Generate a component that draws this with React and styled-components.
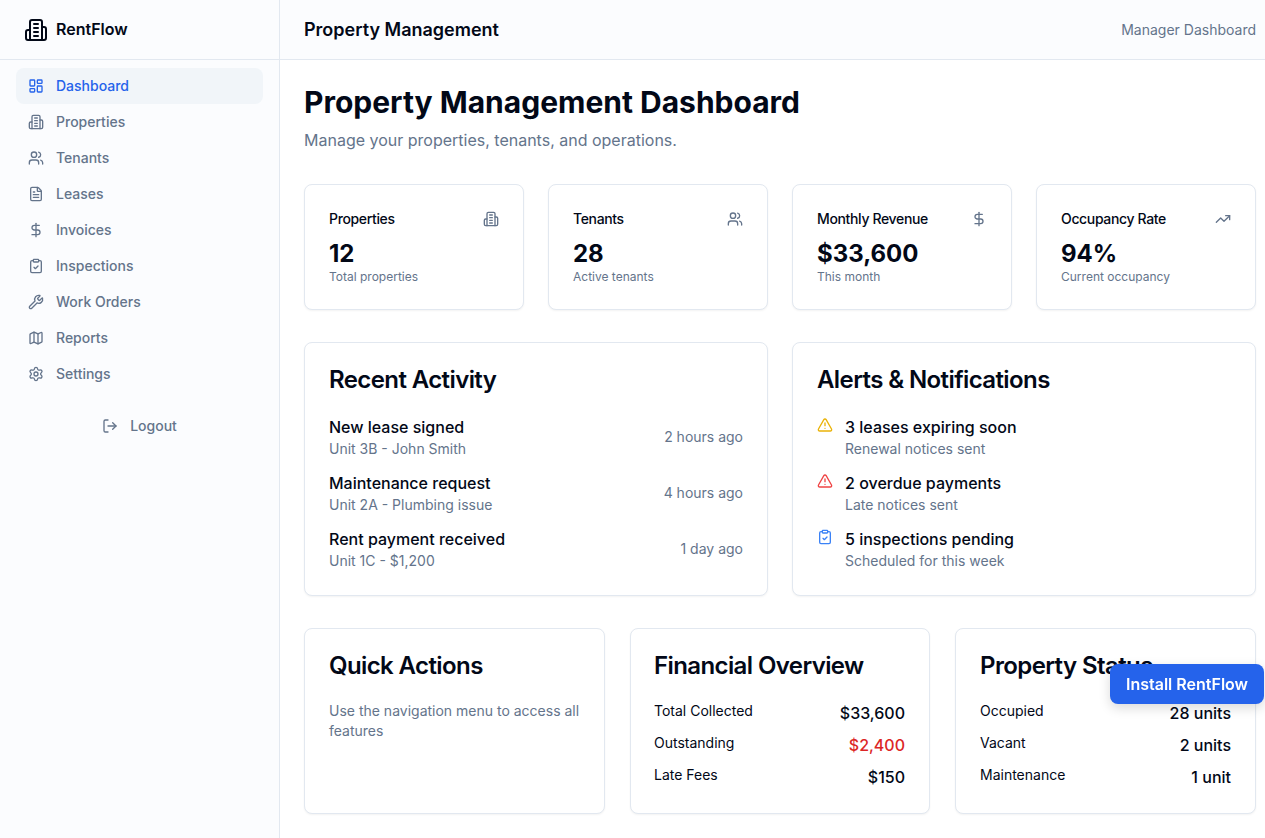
import React from "react";
import styled, { createGlobalStyle } from "styled-components";
import {
  LayoutDashboard,
  Users,
  FileText,
  DollarSign,
  ClipboardCheck,
  Wrench,
  Map,
  Settings,
  LogOut,
  TrendingUp,
  TriangleAlert,
} from "lucide-react";

const GlobalStyle = createGlobalStyle`
  * { box-sizing: border-box; }
  html, body {
    margin: 0;
    height: 100%;
    overflow: hidden;
    background: #ffffff;
    color: #020817;
    font-family: Inter, "Liberation Sans", sans-serif;
  }
`;

const Layout = styled.div`
  display: flex;
  width: 1265px;
  height: 838px;
`;

const Sidebar = styled.aside`
  width: 280px;
  flex-shrink: 0;
  border-right: 1px solid #e2e8f0;
  background: #fbfcfe;
`;

const Brand = styled.div`
  height: 60px;
  display: flex;
  align-items: center;
  gap: 8px;
  padding: 0 24px;
  border-bottom: 1px solid #e2e8f0;
  font-size: 16px;
  font-weight: 600;
`;

const Lifted = styled.span`
  padding-bottom: 2px;
`;

const Nav = styled.nav`
  display: flex;
  flex-direction: column;
  padding: 8px 16px;
`;

const NavItem = styled.a`
  height: 36px;
  display: flex;
  align-items: center;
  gap: 12px;
  padding: 0 12px;
  border-radius: 8px;
  font-size: 14px;
  font-weight: 500;
  color: ${(props) => (props.$active ? "#2563eb" : "#64748b")};
  background: ${(props) => (props.$active ? "#f1f5f9" : "transparent")};
`;

const LogoutButton = styled.button`
  height: 36px;
  margin-top: 16px;
  display: flex;
  align-items: center;
  justify-content: center;
  gap: 12px;
  border: 0;
  background: transparent;
  font-family: inherit;
  font-size: 14px;
  font-weight: 500;
  color: #64748b;
`;

const Content = styled.div`
  flex: 1;
  min-width: 0;
`;

const Header = styled.header`
  height: 60px;
  display: flex;
  align-items: center;
  justify-content: space-between;
  padding: 0 9px 0 24px;
  background: #fbfcfe;
  border-bottom: 1px solid #e2e8f0;
`;

const HeaderTitle = styled.div`
  font-size: 18px;
  font-weight: 600;
`;

const HeaderRole = styled.div`
  font-size: 14px;
  color: #64748b;
`;

const Main = styled.main`
  padding: 24px 9px 24px 24px;
`;

const PageTitle = styled.h1`
  margin: 0;
  font-size: 30px;
  line-height: 36px;
  font-weight: 700;
`;

const PageSub = styled.p`
  margin: 8px 0 0;
  font-size: 16px;
  line-height: 24px;
  color: #64748b;
`;

const Grid = styled.div`
  display: grid;
  grid-template-columns: ${(props) => props.$columns};
  gap: ${(props) => props.$gap || "24px"};
  margin-top: 32px;
`;

const Card = styled.section`
  background: #ffffff;
  border: 1px solid #e2e8f0;
  border-radius: 8px;
  box-shadow: 0 1px 2px rgba(0, 0, 0, 0.05);
  padding: 24px;
`;

const MiddleCard = styled(Card)`
  padding-left: 23px;
`;

const StatHead = styled.div`
  display: flex;
  align-items: center;
  justify-content: space-between;
  height: 20px;
  margin-bottom: 8px;
  font-size: 14px;
  font-weight: 500;
  letter-spacing: -0.35px;
  color: #020817;

  svg {
    color: #64748b;
  }
`;

const StatValue = styled.div`
  font-size: 24px;
  line-height: 32px;
  font-weight: 700;
  padding-top: 1px;
  margin-bottom: -1px;
`;

const StatNote = styled.div`
  font-size: 12px;
  line-height: 16px;
  color: #64748b;
`;

const CardTitle = styled.h2`
  margin: 0 0 24px;
  padding-top: 1px;
  height: 24px;
  font-size: 24px;
  line-height: 24px;
  font-weight: 600;
  letter-spacing: -0.6px;
`;

const List = styled.div`
  display: flex;
  flex-direction: column;
  gap: 12px;
`;

const ActivityRow = styled.div`
  display: flex;
  align-items: center;
  justify-content: space-between;
`;

const AlertRow = styled.div`
  display: flex;
  align-items: flex-start;
  gap: 12px;

  svg {
    margin-top: 2px;
    color: ${(props) => props.$color};
  }
`;

const ItemTitle = styled.div`
  font-size: 16px;
  line-height: 24px;
  font-weight: 500;
`;

const ItemNote = styled.div`
  font-size: 14px;
  line-height: 20px;
  color: #64748b;
`;

const When = styled.div`
  font-size: 14px;
  color: #64748b;
  padding-bottom: 2px;
`;

const Hint = styled.p`
  margin: 0;
  font-size: 14px;
  line-height: 20px;
  color: #64748b;
`;

const Figures = styled.div`
  display: flex;
  flex-direction: column;
  gap: 8px;
`;

const Figure = styled.div`
  display: flex;
  justify-content: space-between;
  align-items: flex-start;
  height: 24px;
  font-size: 14px;
  line-height: 20px;
`;

const FigureValue = styled.span`
  font-size: 16px;
  line-height: 24px;
  font-weight: 500;
  color: ${(props) => props.$color || "#020817"};
`;

const InstallButton = styled.button`
  position: fixed;
  left: 1110px;
  top: 664px;
  width: 154px;
  height: 40px;
  border: 0;
  border-radius: 8px;
  background: #2563eb;
  color: #ffffff;
  font-family: inherit;
  font-size: 16px;
  font-weight: 600;
  box-shadow: 0 4px 12px rgba(0, 0, 0, 0.15);
`;

// the tall tower building mark, the current lucide Building2 is a different drawing
const Tower = ({ size = 16 }) => (
  <svg
    width={size}
    height={size}
    viewBox="0 0 24 24"
    fill="none"
    stroke="currentColor"
    strokeWidth="2"
    strokeLinecap="round"
    strokeLinejoin="round"
  >
    <path d="M6 22V4a2 2 0 0 1 2-2h8a2 2 0 0 1 2 2v18Z" />
    <path d="M6 12H4a2 2 0 0 0-2 2v6a2 2 0 0 0 2 2h2" />
    <path d="M18 9h2a2 2 0 0 1 2 2v9a2 2 0 0 1-2 2h-2" />
    <path d="M10 6h4" />
    <path d="M10 10h4" />
    <path d="M10 14h4" />
    <path d="M10 18h4" />
  </svg>
);

const navItems = [
  ["Dashboard", LayoutDashboard],
  ["Properties", Tower],
  ["Tenants", Users],
  ["Leases", FileText],
  ["Invoices", DollarSign],
  ["Inspections", ClipboardCheck],
  ["Work Orders", Wrench],
  ["Reports", Map],
  ["Settings", Settings],
];

const stats = [
  ["Properties", Tower, "12", "Total properties"],
  ["Tenants", Users, "28", "Active tenants"],
  ["Monthly Revenue", DollarSign, "$33,600", "This month"],
  ["Occupancy Rate", TrendingUp, "94%", "Current occupancy"],
];

const activity = [
  ["New lease signed", "Unit 3B - John Smith", "2 hours ago"],
  ["Maintenance request", "Unit 2A - Plumbing issue", "4 hours ago"],
  ["Rent payment received", "Unit 1C - $1,200", "1 day ago"],
];

const alerts = [
  [TriangleAlert, "#eab308", "3 leases expiring soon", "Renewal notices sent"],
  [TriangleAlert, "#ef4444", "2 overdue payments", "Late notices sent"],
  [ClipboardCheck, "#3b82f6", "5 inspections pending", "Scheduled for this week"],
];

const App = () => {
  return (
    <Layout>
      <GlobalStyle />
      <Sidebar>
        <Brand>
          <Tower size={24} />
          <Lifted>RentFlow</Lifted>
        </Brand>
        <Nav>
          {navItems.map(([label, Icon], i) => (
            <NavItem key={label} $active={i === 0}>
              <Icon size={16} />
              <Lifted>{label}</Lifted>
            </NavItem>
          ))}
          <LogoutButton>
            <LogOut size={16} />
            <Lifted>Logout</Lifted>
          </LogoutButton>
        </Nav>
      </Sidebar>
      <Content>
        <Header>
          <HeaderTitle>Property Management</HeaderTitle>
          <HeaderRole>Manager Dashboard</HeaderRole>
        </Header>
        <Main>
          <PageTitle>Property Management Dashboard</PageTitle>
          <PageSub>Manage your properties, tenants, and operations.</PageSub>
          <Grid $columns="repeat(4, minmax(0, 1fr))">
            {stats.map(([label, Icon, value, note]) => (
              <Card key={label}>
                <StatHead>
                  <Lifted>{label}</Lifted>
                  <Icon size={16} />
                </StatHead>
                <StatValue>{value}</StatValue>
                <StatNote>{note}</StatNote>
              </Card>
            ))}
          </Grid>
          <Grid $columns="repeat(2, minmax(0, 1fr))">
            <Card>
              <CardTitle>Recent Activity</CardTitle>
              <List>
                {activity.map(([title, note, when]) => (
                  <ActivityRow key={title}>
                    <div>
                      <ItemTitle>{title}</ItemTitle>
                      <ItemNote>{note}</ItemNote>
                    </div>
                    <When>{when}</When>
                  </ActivityRow>
                ))}
              </List>
            </Card>
            <Card>
              <CardTitle>Alerts &amp; Notifications</CardTitle>
              <List>
                {alerts.map(([Icon, color, title, note]) => (
                  <AlertRow key={title} $color={color}>
                    <Icon size={16} />
                    <div>
                      <ItemTitle>{title}</ItemTitle>
                      <ItemNote>{note}</ItemNote>
                    </div>
                  </AlertRow>
                ))}
              </List>
            </Card>
          </Grid>
          <Grid $columns="301px 300px 301px" $gap="25px">
            <Card>
              <CardTitle>Quick Actions</CardTitle>
              <Hint>Use the navigation menu to access all features</Hint>
            </Card>
            <MiddleCard>
              <CardTitle>Financial Overview</CardTitle>
              <Figures>
                <Figure>
                  Total Collected
                  <FigureValue>$33,600</FigureValue>
                </Figure>
                <Figure>
                  Outstanding
                  <FigureValue $color="#dc2626">$2,400</FigureValue>
                </Figure>
                <Figure>
                  Late Fees
                  <FigureValue>$150</FigureValue>
                </Figure>
              </Figures>
            </MiddleCard>
            <Card>
              <CardTitle>Property Status</CardTitle>
              <Figures>
                <Figure>
                  Occupied
                  <FigureValue>28 units</FigureValue>
                </Figure>
                <Figure>
                  Vacant
                  <FigureValue>2 units</FigureValue>
                </Figure>
                <Figure>
                  Maintenance
                  <FigureValue>1 unit</FigureValue>
                </Figure>
              </Figures>
            </Card>
          </Grid>
        </Main>
      </Content>
      <InstallButton>Install RentFlow</InstallButton>
    </Layout>
  );
};

export default App;
